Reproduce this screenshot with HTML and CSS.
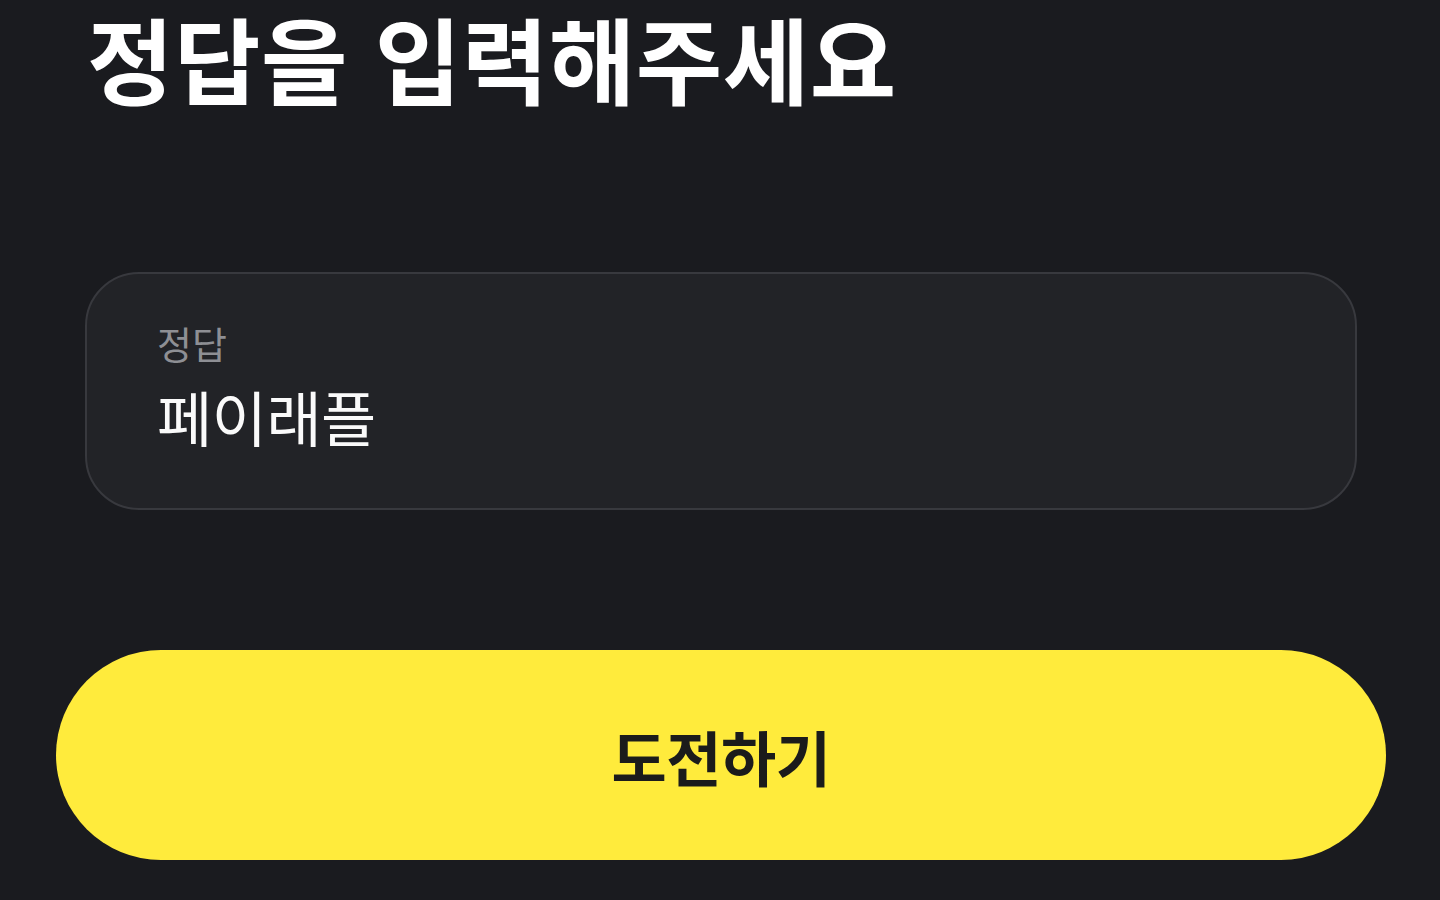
FILE: index.html
```html
<!DOCTYPE html>
<html lang="ko">
<head>
  <meta charset="UTF-8">
  <meta name="viewport" content="width=device-width, initial-scale=1">
  <title>정답 입력</title>
  <link rel="stylesheet" href="styles.css">
</head>
<body>

  <main class="page">
    <h1 class="title">정답을 입력해주세요</h1>

    <div class="answer-field">
      <label class="answer-label" for="answer">정답</label>
      <input id="answer" class="answer-input" type="text" value="페이래플">
    </div>

    <button type="button" class="challenge-btn">도전하기</button>
  </main>

</body>
</html>
```

FILE: styles.css
```css
/* Style global */
body {
  margin: 0;
  font-family: 'Noto Sans CJK KR', 'Noto Sans', sans-serif;
  background: #1a1b1f;
  color: #fff;
}
.page {
  height: 900px;
  overflow: hidden;
  display: flex;
  flex-direction: column;
}
/* Titre */
.title {
  margin: 0;
  padding: 0 0 0 87px;
  font-size: 94px;
  font-weight: 700;
  line-height: 114px;
  letter-spacing: 0.5px;
  color: #fff;
}
/* Champ de réponse */
.answer-field {
  margin: 158px 83px 0 85px;
  height: 234px;
  padding: 0 70px;
  background: #222327;
  border: 2px solid #38393e;
  border-radius: 54px;
  display: flex;
  flex-direction: column;
  justify-content: center;
}
.answer-label {
  font-size: 38px;
  line-height: 46px;
  color: #8e8f94;
  margin-top: -10px;
}
.answer-input {
  margin-top: 14px;
  padding: 0;
  border: none;
  outline: none;
  background: transparent;
  font-family: inherit;
  font-size: 60px;
  line-height: 72px;
  color: #fafafa;
  letter-spacing: -0.5px;
}
/* Bouton */
.challenge-btn {
  margin: 140px 54px 0 56px;
  height: 210px;
  border: none;
  border-radius: 105px;
  background: #ffeb3c;
  color: #1b1b1b;
  font-family: inherit;
  font-size: 60px;
  font-weight: 700;
  letter-spacing: -0.5px;
  cursor: pointer;
}
```
